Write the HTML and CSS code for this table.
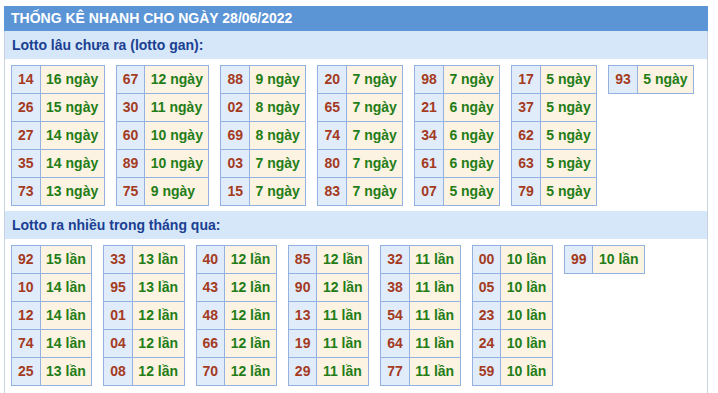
FILE: index.html
```html
<!DOCTYPE html>
<html lang="vi">
<head>
<meta charset="utf-8">
<link rel="stylesheet" href="styles.css">
</head>
<body>
<div class="box">
  <div class="title">THỐNG KÊ NHANH CHO NGÀY 28/06/2022</div>
  <div class="sub">Lotto lâu chưa ra (lotto gan):</div>
  <div class="group">
    <table class="t"><tr><td class="n">14</td><td class="v">16 ngày</td></tr><tr><td class="n">26</td><td class="v">15 ngày</td></tr><tr><td class="n">27</td><td class="v">14 ngày</td></tr><tr><td class="n">35</td><td class="v">14 ngày</td></tr><tr><td class="n">73</td><td class="v">13 ngày</td></tr></table>
    <table class="t"><tr><td class="n">67</td><td class="v">12 ngày</td></tr><tr><td class="n">30</td><td class="v">11 ngày</td></tr><tr><td class="n">60</td><td class="v">10 ngày</td></tr><tr><td class="n">89</td><td class="v">10 ngày</td></tr><tr><td class="n">75</td><td class="v">9 ngày</td></tr></table>
    <table class="t"><tr><td class="n">88</td><td class="v">9 ngày</td></tr><tr><td class="n">02</td><td class="v">8 ngày</td></tr><tr><td class="n">69</td><td class="v">8 ngày</td></tr><tr><td class="n">03</td><td class="v">7 ngày</td></tr><tr><td class="n">15</td><td class="v">7 ngày</td></tr></table>
    <table class="t"><tr><td class="n">20</td><td class="v">7 ngày</td></tr><tr><td class="n">65</td><td class="v">7 ngày</td></tr><tr><td class="n">74</td><td class="v">7 ngày</td></tr><tr><td class="n">80</td><td class="v">7 ngày</td></tr><tr><td class="n">83</td><td class="v">7 ngày</td></tr></table>
    <table class="t"><tr><td class="n">98</td><td class="v">7 ngày</td></tr><tr><td class="n">21</td><td class="v">6 ngày</td></tr><tr><td class="n">34</td><td class="v">6 ngày</td></tr><tr><td class="n">61</td><td class="v">6 ngày</td></tr><tr><td class="n">07</td><td class="v">5 ngày</td></tr></table>
    <table class="t"><tr><td class="n">17</td><td class="v">5 ngày</td></tr><tr><td class="n">37</td><td class="v">5 ngày</td></tr><tr><td class="n">62</td><td class="v">5 ngày</td></tr><tr><td class="n">63</td><td class="v">5 ngày</td></tr><tr><td class="n">79</td><td class="v">5 ngày</td></tr></table>
    <table class="t"><tr><td class="n">93</td><td class="v">5 ngày</td></tr></table>
  </div>
  <div class="sub">Lotto ra nhiều trong tháng qua:</div>
  <div class="group">
    <table class="t"><tr><td class="n">92</td><td class="v">15 lần</td></tr><tr><td class="n">10</td><td class="v">14 lần</td></tr><tr><td class="n">12</td><td class="v">14 lần</td></tr><tr><td class="n">74</td><td class="v">14 lần</td></tr><tr><td class="n">25</td><td class="v">13 lần</td></tr></table>
    <table class="t"><tr><td class="n">33</td><td class="v">13 lần</td></tr><tr><td class="n">95</td><td class="v">13 lần</td></tr><tr><td class="n">01</td><td class="v">12 lần</td></tr><tr><td class="n">04</td><td class="v">12 lần</td></tr><tr><td class="n">08</td><td class="v">12 lần</td></tr></table>
    <table class="t"><tr><td class="n">40</td><td class="v">12 lần</td></tr><tr><td class="n">43</td><td class="v">12 lần</td></tr><tr><td class="n">48</td><td class="v">12 lần</td></tr><tr><td class="n">66</td><td class="v">12 lần</td></tr><tr><td class="n">70</td><td class="v">12 lần</td></tr></table>
    <table class="t"><tr><td class="n">85</td><td class="v">12 lần</td></tr><tr><td class="n">90</td><td class="v">12 lần</td></tr><tr><td class="n">13</td><td class="v">11 lần</td></tr><tr><td class="n">19</td><td class="v">11 lần</td></tr><tr><td class="n">29</td><td class="v">11 lần</td></tr></table>
    <table class="t"><tr><td class="n">32</td><td class="v">11 lần</td></tr><tr><td class="n">38</td><td class="v">11 lần</td></tr><tr><td class="n">54</td><td class="v">11 lần</td></tr><tr><td class="n">64</td><td class="v">11 lần</td></tr><tr><td class="n">77</td><td class="v">11 lần</td></tr></table>
    <table class="t"><tr><td class="n">00</td><td class="v">10 lần</td></tr><tr><td class="n">05</td><td class="v">10 lần</td></tr><tr><td class="n">23</td><td class="v">10 lần</td></tr><tr><td class="n">24</td><td class="v">10 lần</td></tr><tr><td class="n">59</td><td class="v">10 lần</td></tr></table>
    <table class="t"><tr><td class="n">99</td><td class="v">10 lần</td></tr></table>
  </div>
</div>
</body>
</html>
```

FILE: styles.css
```css
html, body {
  margin: 0;
  padding: 0;
  background: #ffffff;
}
body {
  font-family: "Liberation Sans", Arial, sans-serif;
  padding-top: 6px;
}
.box {
  margin-left: 4px;
  width: 702px;
  border-left: 1px solid #c9d3e0;
  border-right: 1px solid #c9d3e0;
  border-bottom: 2px solid #e4e6e9;
  padding-bottom: 3px;
}
.title {
  height: 25px;
  line-height: 25px;
  background: #5b95d6;
  color: #ffffff;
  font-weight: bold;
  font-size: 14px;
  padding-left: 7px;
  margin-left: -1px;
  margin-right: -1px;
}
.sub {
  height: 28px;
  line-height: 28px;
  background: #d5e7f9;
  color: #1b3f92;
  font-weight: bold;
  font-size: 14px;
  padding-left: 7px;
}
.group {
  display: flex;
  align-items: flex-start;
  gap: 11px;
  padding: 6px 6px 5px 6px;
}
.t {
  border-collapse: collapse;
  font-size: 14px;
  font-weight: bold;
}
.t td {
  border: 1px solid #93b2e1;
  height: 27px;
  line-height: 27px;
  padding: 0;
  white-space: nowrap;
}
.t td.n {
  background: #e1ecfb;
  color: #a43b1f;
  padding: 0 6px;
  width: 15px;
  text-align: center;
}
.t td.v {
  background: #fdf3e2;
  color: #237d17;
  padding: 0 5.5px;
  text-align: left;
}
```
